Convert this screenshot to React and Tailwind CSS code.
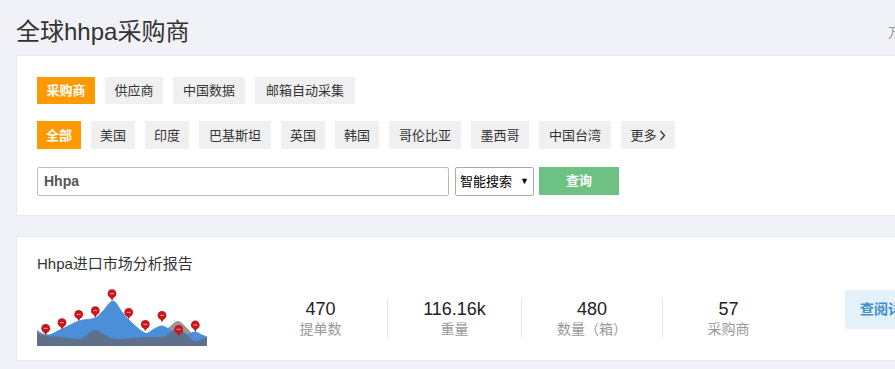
import React from "react";

function smooth(pts) {
  let d = `M${pts[0][0]},${pts[0][1]}`;
  for (let i = 0; i < pts.length - 1; i++) {
    const p0 = pts[i - 1] || pts[i];
    const p1 = pts[i];
    const p2 = pts[i + 1];
    const p3 = pts[i + 2] || p2;
    const c1x = p1[0] + (p2[0] - p0[0]) / 6;
    const c1y = p1[1] + (p2[1] - p0[1]) / 6;
    const c2x = p2[0] - (p3[0] - p1[0]) / 6;
    const c2y = p2[1] - (p3[1] - p1[1]) / 6;
    d += ` C${c1x.toFixed(1)},${c1y.toFixed(1)} ${c2x.toFixed(1)},${c2y.toFixed(1)} ${p2[0]},${p2[1]}`;
  }
  return d;
}

function area(pts) {
  return smooth(pts) + ` L${pts[pts.length - 1][0]},56 L0,56 Z`;
}

const grayPts = [[0,40],[9,44],[30,45],[58,38],[80,46],[120,45],[131,38],[141,31],[151,39],[160,48],[170,48]];
const bluePts = [[0,42],[9,46],[25,39],[42,31],[58,28],[66,21],[76,11],[85,22],[93,31],[108,43],[117,39],[125,36],[133,40],[142,47],[150,45],[158,42],[165,45],[170,47]];
const slatePts = [[0,43],[9,46],[25,47],[42,49],[50,45],[58,40],[68,45],[80,49],[108,47],[126,47],[134,42],[141,38],[149,44],[158,51],[170,47]];
const pins = [[8.7,38.3],[25,32.7],[41.7,24.3],[58.3,20.7],[75,3.7],[91.7,22.3],[108.3,34.3],[125,25.3],[141.7,39.3],[158.3,35]];

function Chart() {
  return (
    <svg width="170" height="56" viewBox="0 0 170 56" className="block shrink-0 overflow-visible">
      <path d={area(grayPts)} fill="#989898" />
      <path d={area(bluePts)} fill="#4a8fd8" />
      <path d={smooth(bluePts)} fill="none" stroke="#3f84cf" strokeWidth="0.8" />
      <path d={area(slatePts)} fill="#5e708b" />
      {pins.map(([x, y], i) => (
        <g key={i}>
          <path d={`M${x - 2},${y + 3} L${x},${y + 7} L${x + 2},${y + 3} Z`} fill="#c0141c" />
          <circle cx={x} cy={y} r="4.4" fill="#c8161e" />
          <rect x={x - 2} y={y - 0.4} width="4" height="0.8" fill="#f3c0c0" />
        </g>
      ))}
    </svg>
  );
}

const row1 = [
  { t: "采购商", w: "w-[58px]", active: true },
  { t: "供应商", w: "w-[58px]" },
  { t: "中国数据", w: "w-[72px]" },
  { t: "邮箱自动采集", w: "w-[100px]" },
];

const row2 = [
  { t: "全部", w: "w-[44px]", active: true },
  { t: "美国", w: "w-[44px]" },
  { t: "印度", w: "w-[44px]" },
  { t: "巴基斯坦", w: "w-[72px]" },
  { t: "英国", w: "w-[44px]" },
  { t: "韩国", w: "w-[44px]" },
  { t: "哥伦比亚", w: "w-[72px]" },
  { t: "墨西哥", w: "w-[58px]" },
  { t: "中国台湾", w: "w-[72px]" },
  { t: "更多", w: "w-[54px]", more: true },
];

function Tag({ t, w, active, more, h }) {
  return (
    <div
      className={`${w} ${h} flex items-center justify-center text-[13px] leading-none whitespace-nowrap ${
        active ? "bg-[#ff9900] text-white font-bold" : "bg-[#f0f0f0] text-[#333]"
      }`}
    >
      {t}
      {more && (
        <svg width="7" height="11" viewBox="0 0 7 11" className="ml-[2px]">
          <path d="M1.5,1 L5.5,5.5 L1.5,10" fill="none" stroke="#333" strokeWidth="1.3" />
        </svg>
      )}
    </div>
  );
}

const stats = [
  { n: "470", l: "提单数", c: "w-[133px]" },
  { n: "116.16k", l: "重量", c: "w-[134px] border-l border-[#e6e6e6]" },
  { n: "480", l: "数量（箱）", c: "w-[141px] border-l border-[#e6e6e6]" },
  { n: "57", l: "采购商", c: "w-[132px] border-l border-[#e6e6e6]" },
];

export default function App() {
  return (
    <div className="w-[895px] h-[369px] overflow-hidden bg-[#f1f2f7] font-['Liberation_Sans','Noto_Sans_CJK_SC',sans-serif]">
      <div className="w-[1200px] pl-[16px]">
        <div className="flex justify-between items-center w-[885px] h-[32px] mt-[16px]">
          <h1 className="text-[24px] leading-[32px] text-[#333] font-normal">全球hhpa采购商</h1>
          <span className="text-[13px] leading-[32px] text-[#999] pt-[2px]">万</span>
        </div>

        <div className="mt-[7px] bg-white border border-[#e8e8ee] pl-[20px] pt-[21px] pb-[19px]">
          <div className="flex gap-[10px]">
            {row1.map((x) => (
              <Tag key={x.t} {...x} h="h-[27px]" />
            ))}
          </div>
          <div className="flex gap-[10px] mt-[17px]">
            {row2.map((x) => (
              <Tag key={x.t} {...x} h="h-[28px]" />
            ))}
          </div>
          <div className="flex items-start mt-[18px]">
            <div className="w-[412px] h-[29px] border border-[#bdbdbd] rounded-[2px] flex items-center pl-[6px] text-[14px] font-bold text-[#555] font-['Liberation_Sans',sans-serif]">
              Hhpa
            </div>
            <div className="ml-[6px] w-[79px] h-[29px] border border-[#aaa] rounded-[2px] flex items-center pl-[4px] text-[13px] text-black">
              <span>智能搜索</span>
              <span className="ml-[8px] text-[9px] leading-none">▼</span>
            </div>
            <div className="ml-[5px] w-[80px] h-[28px] bg-[#6dc183] text-white text-[13px] font-bold flex items-center justify-center">
              查询
            </div>
          </div>
        </div>

        <div className="mt-[20px] bg-white border border-[#e8e8ee] pl-[20px] pt-[17px] pb-[14px]">
          <div className="h-[20px] text-[15px] leading-[20px] text-[#333]">Hhpa进口市场分析报告</div>
          <div className="flex items-center mt-[16px] h-[56px]">
            <Chart />
            <div className="flex ml-[47px]">
              {stats.map((s) => (
                <div key={s.n} className={`${s.c} h-[40px] flex flex-col items-center`}>
                  <div className="text-[18px] leading-[22px] text-[#222]">{s.n}</div>
                  <div className="text-[14px] leading-[18px] text-[#999] whitespace-nowrap">{s.l}</div>
                </div>
              ))}
            </div>
            <div className="self-start ml-[51px] h-[39px] px-[15px] rounded-[3px] bg-[#e3f1f8] text-[#3d8fcf] text-[14px] font-bold flex items-center whitespace-nowrap">
              查阅详情
            </div>
          </div>
        </div>
      </div>
    </div>
  );
}
